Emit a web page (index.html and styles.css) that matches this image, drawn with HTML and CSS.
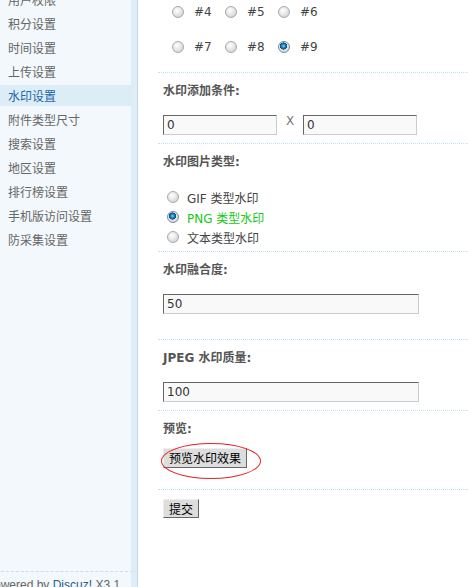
FILE: index.html
```html
<!DOCTYPE html>
<html lang="zh-CN">
<head>
  <meta charset="UTF-8" />
  <title>水印设置</title>
  <link rel="stylesheet" href="styles.css">
</head>
<body>
  <div class="side">
    <ul class="menu">
      <li>用户权限</li>
      <li>积分设置</li>
      <li>时间设置</li>
      <li>上传设置</li>
      <li class="on">水印设置</li>
      <li>附件类型尺寸</li>
      <li>搜索设置</li>
      <li>地区设置</li>
      <li>排行榜设置</li>
      <li>手机版访问设置</li>
      <li>防采集设置</li>
    </ul>
    <div class="copy">Powered by <span>Discuz!</span> X3.1</div>
  </div>

  <div class="main">
    <div class="pos">
      <div class="pos-row">
        <label><input type="radio" name="pos" /> #4</label>
        <label><input type="radio" name="pos" /> #5</label>
        <label><input type="radio" name="pos" /> #6</label>
      </div>
      <div class="pos-row">
        <label><input type="radio" name="pos" /> #7</label>
        <label><input type="radio" name="pos" /> #8</label>
        <label><input type="radio" name="pos" checked /> #9</label>
      </div>
    </div>

    <div class="sec">
      <h3>水印添加条件:</h3>
      <div class="cond">
        <input type="text" class="txt short" value="0" />
        <span class="x">X</span>
        <input type="text" class="txt short" value="0" />
      </div>
    </div>

    <div class="sec sec-types">
      <h3>水印图片类型:</h3>
      <div class="types">
        <label><input type="radio" name="type" /> GIF 类型水印</label>
        <label class="sel"><input type="radio" name="type" checked /> PNG 类型水印</label>
        <label><input type="radio" name="type" /> 文本类型水印</label>
      </div>
    </div>

    <div class="sec sec-trans">
      <h3>水印融合度:</h3>
      <input type="text" class="txt long" value="50" />
    </div>

    <div class="sec">
      <h3>JPEG 水印质量:</h3>
      <input type="text" class="txt long" value="100" />
    </div>

    <div class="sec sec-preview">
      <h3>预览:</h3>
      <div class="pv">
        <button type="button" class="btn">预览水印效果</button>
        <span class="ring"></span>
      </div>
    </div>

    <div class="sec sec-submit">
      <button type="submit" class="btn btn-sm">提交</button>
    </div>
  </div>
</body>
</html>
```

FILE: styles.css
```css
body {
  margin: 0;
  height: 587px;
  display: flex;
  overflow: hidden;
  background: #fff;
  font: 12px "DejaVu Sans", "Noto Sans CJK SC", sans-serif;
  color: #444;
}

/* menu lateral */
.side {
  width: 138px;
  flex-shrink: 0;
  display: flex;
  flex-direction: column;
  overflow: hidden;
  background: linear-gradient(to right, #f2f8fc 131px, #deedf8 131px, #deedf8 137px, #c3d8e8 137px);
}

.menu {
  list-style: none;
  margin: -11px 0 0;
  padding: 0;
  width: 131px;
}

.menu li {
  height: 21px;
  line-height: 25px;
  margin-bottom: 3px;
  padding-left: 8px;
  color: #666;
  white-space: nowrap;
}

.menu li.on {
  background-color: #dcedf8;
  color: #2366a8;
}

.copy {
  margin-top: auto;
  height: 16px;
  box-sizing: border-box;
  border-top: 1px dashed #d3dbe2;
  padding-top: 6px;
  margin-left: -14px;
  line-height: 14px;
  white-space: nowrap;
  font-family: "Liberation Sans", sans-serif;
  color: #666;
}

.copy span {
  color: #2b5c8a;
}

/* contenido */
.main {
  flex: 1;
  padding-left: 20px;
}

.pos {
  padding: 2px 0 15px 14px;
}

.pos-row {
  display: flex;
  height: 20px;
  align-items: center;
}

.pos-row + .pos-row {
  margin-top: 15px;
}

.pos-row label {
  width: 53px;
  display: flex;
  align-items: center;
}

input[type="radio"] {
  appearance: none;
  -webkit-appearance: none;
  width: 12px;
  height: 12px;
  margin: 0 10px 0 0;
  border: 1px solid #a9a9a9;
  border-radius: 50%;
  background: radial-gradient(circle at 40% 35%, #fff 0, #e2e2e2 55%, #c8c8c8 100%);
  flex-shrink: 0;
}

input[type="radio"]:checked {
  border-color: #7d8a96;
  background:
    radial-gradient(circle at 45% 40%, #8fd6ff 0, #1b83c9 22%, #0b4a7c 42%, transparent 46%),
    radial-gradient(circle at 40% 35%, #fff 0, #e2e2e2 55%, #c8c8c8 100%);
}

.sec {
  border-top: 1px dotted #bfe0f5;
  padding: 0 0 8px 5px;
}

.sec h3 {
  margin: 0 0 16px;
  padding-top: 11px;
  font-size: 12px;
  line-height: 15px;
  font-weight: bold;
  color: #555;
}

.cond {
  display: flex;
  align-items: flex-start;
}

.x {
  width: 26px;
  margin-top: -1px;
  line-height: 14px;
  text-align: center;
  color: #777;
}

.txt {
  box-sizing: border-box;
  height: 20px;
  margin: 0;
  padding: 0 3px;
  border: 1px solid;
  border-color: #666 #ccc #ccc #666;
  background-color: #f9f9f9;
  font: 12px "DejaVu Sans", sans-serif;
  color: #333;
  outline: none;
}

.short {
  width: 114px;
}

.long {
  width: 256px;
}

.sec-types h3 {
  margin-bottom: 17px;
}

.sec-types {
  padding-bottom: 4px;
}

.types {
  padding-left: 4px;
}

.types label {
  display: flex;
  align-items: center;
  height: 20px;
}

.types input[type="radio"] {
  margin-right: 8px;
}

.types .sel {
  color: #16c916;
}

.sec-trans {
  padding-bottom: 25px;
}

.sec-preview h3 {
  margin-bottom: 11px;
}

.sec-preview {
  padding-bottom: 21px;
}

.pv {
  position: relative;
  display: inline-block;
  vertical-align: top;
}

.btn {
  display: block;
  box-sizing: border-box;
  height: 20px;
  margin: 0;
  padding: 0 5px;
  border: 1px solid;
  border-color: #eee #666 #666 #eee;
  background-color: #ddd;
  font: 12px "Noto Sans CJK SC", sans-serif;
  line-height: 16px;
  color: #000;
}

.btn-sm {
  height: 19px;
}

/* círculo rojo sobre el botón */
.ring {
  position: absolute;
  left: -2px;
  top: -5px;
  width: 100px;
  height: 36px;
  box-sizing: border-box;
  border: 1px solid #e52222;
  border-radius: 50%;
  pointer-events: none;
}

.sec-submit {
  padding-top: 9px;
}
```
